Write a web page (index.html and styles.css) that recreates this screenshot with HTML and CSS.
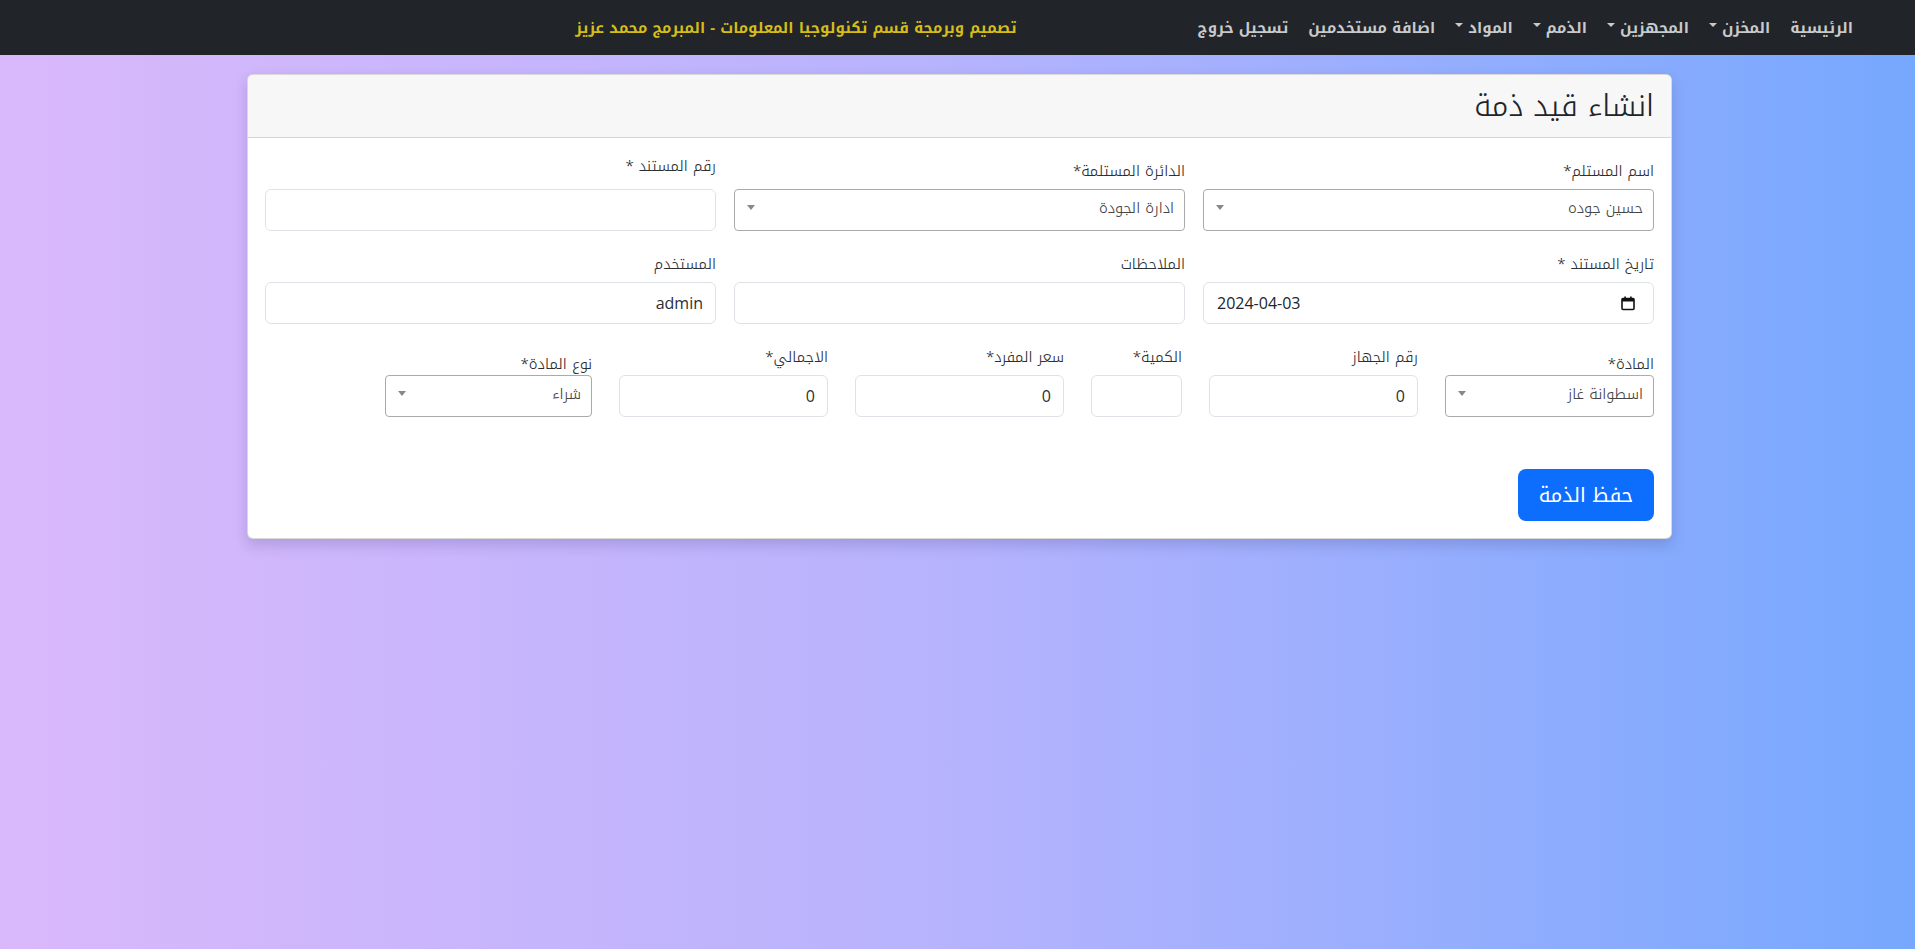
FILE: index.html
```html
<!DOCTYPE html>
<html lang="ar" dir="rtl">
<head>
<meta charset="utf-8">
<title>انشاء قيد ذمة</title>
<link rel="stylesheet" href="styles.css">
</head>
<body>
<nav class="topbar">
  <ul class="nav-links">
    <li class="nav-item">الرئيسية</li>
    <li class="nav-item dd">المخزن</li>
    <li class="nav-item dd">المجهزين</li>
    <li class="nav-item dd">الذمم</li>
    <li class="nav-item dd">المواد</li>
    <li class="nav-item">اضافة مستخدمين</li>
    <li class="nav-item">تسجيل خروج</li>
  </ul>
  <span class="credit">تصميم وبرمجة قسم تكنولوجيا المعلومات - المبرمج محمد عزيز</span>
</nav>

<main class="page">
  <section class="card">
    <header class="card-header">
      <h3 class="card-title">انشاء قيد ذمة</h3>
    </header>
    <div class="card-body">
      <div class="grid3">
        <div class="field">
          <label class="lbl">اسم المستلم*</label>
          <div class="select"><span class="sel-text">حسين جوده</span><span class="sel-arrow"></span></div>
        </div>
        <div class="field">
          <label class="lbl">الدائرة المستلمة*</label>
          <div class="select"><span class="sel-text">ادارة الجودة</span><span class="sel-arrow"></span></div>
        </div>
        <div class="field">
          <label class="lbl lbl-up">رقم المستند *</label>
          <div class="input"></div>
        </div>
      </div>

      <div class="grid3">
        <div class="field">
          <label class="lbl">تاريخ المستند *</label>
          <div class="input date">
            <span class="date-text">2024-04-03</span>
            <svg class="cal" width="14" height="15" viewBox="0 0 14 15"><rect x="1" y="2.5" width="12" height="11" rx="1" fill="none" stroke="#111" stroke-width="1.6"/><rect x="1" y="2.5" width="12" height="3" fill="#111"/><rect x="3.3" y="0.5" width="1.6" height="3" fill="#111"/><rect x="9.1" y="0.5" width="1.6" height="3" fill="#111"/></svg>
          </div>
        </div>
        <div class="field">
          <label class="lbl">الملاحظات</label>
          <div class="input"></div>
        </div>
        <div class="field">
          <label class="lbl">المستخدم</label>
          <div class="input"><span class="val">admin</span></div>
        </div>
      </div>

      <div class="row6">
        <div class="field w-md">
          <label class="lbl lbl-down">المادة*</label>
          <div class="select"><span class="sel-text">اسطوانة غاز</span><span class="sel-arrow"></span></div>
        </div>
        <div class="field w-md">
          <label class="lbl">رقم الجهاز</label>
          <div class="input"><span class="val">0</span></div>
        </div>
        <div class="field w-sm">
          <label class="lbl">الكمية*</label>
          <div class="input"></div>
        </div>
        <div class="field w-md">
          <label class="lbl">سعر المفرد*</label>
          <div class="input"><span class="val">0</span></div>
        </div>
        <div class="field w-md">
          <label class="lbl">الاجمالي*</label>
          <div class="input"><span class="val">0</span></div>
        </div>
        <div class="field w-md2">
          <label class="lbl lbl-down">نوع المادة*</label>
          <div class="select"><span class="sel-text">شراء</span><span class="sel-arrow"></span></div>
        </div>
      </div>

      <div class="actions">
        <button class="btn" type="button">حفظ الذمة</button>
      </div>
    </div>
  </section>
</main>
</body>
</html>
```

FILE: styles.css
```css
* { box-sizing: border-box; }

html, body {
  margin: 0;
  padding: 0;
}

body {
  min-height: 949px;
  font-family: "Noto Kufi Arabic", "Noto Sans Arabic", "Open Sans", "DejaVu Sans", sans-serif;
  font-size: 16px;
  color: #212529;
  background: linear-gradient(to right, #dab8fb 0%, #b6b3fd 50%, #76a8fe 100%);
}

/* ---------- top bar ---------- */
.topbar {
  height: 55px;
  background: #212529;
  display: flex;
  align-items: center;
  padding: 0 62px;
}

.nav-links {
  list-style: none;
  margin: 0;
  padding: 0;
  display: flex;
  align-items: center;
  gap: 20px;
}

.nav-item {
  color: #c9cacb;
  font-weight: 700;
  font-size: 15px;
  white-space: nowrap;
  display: flex;
  align-items: center;
}

.nav-item.dd::after {
  content: "";
  display: inline-block;
  margin-right: 5px;
  border-top: 4px solid #c9cacb;
  border-left: 4px solid transparent;
  border-right: 4px solid transparent;
  transform: translateY(-3px);
}

.credit {
  margin-right: 181px;
  color: #d6bd1a;
  font-weight: 700;
  font-size: 15px;
  white-space: nowrap;
}

/* ---------- page ---------- */
.page {
  padding: 19px 243px 0 247px;
}

.card {
  background: #fff;
  border: 1px solid rgba(0, 0, 0, 0.15);
  border-radius: 6px;
  box-shadow: 0 6px 14px rgba(40, 30, 90, 0.18);
  overflow: hidden;
}

.card-header {
  height: 63px;
  background: #f7f7f7;
  border-bottom: 1px solid #d6d6d6;
  display: flex;
  align-items: center;
  padding: 0 17px;
}

.card-title {
  margin: 0;
  font-size: 30px;
  font-weight: 300;
  color: #212529;
  line-height: 1;
}

.card-body {
  padding: 16px 17px 17px;
}

.grid3 {
  display: grid;
  grid-template-columns: repeat(3, 1fr);
  gap: 18px;
  margin-bottom: 21px;
}

.row6 {
  display: flex;
  gap: 27px;
}

.w-md { width: 209px; }
.w-sm { width: 91px; }
.w-md2 { width: 207px; }

.field {
  display: flex;
  flex-direction: column;
  justify-content: flex-end;
}

.lbl {
  display: block;
  font-size: 15px;
  font-weight: 300;
  line-height: 24px;
  margin-bottom: 6px;
  color: #2b2f33;
  white-space: nowrap;
}

.lbl-up { margin-bottom: 11px; }
.lbl-down { margin-bottom: -1px; }

.input {
  height: 42px;
  border: 1px solid #dee2e6;
  border-radius: 6px;
  background: #fff;
  display: flex;
  align-items: center;
  padding: 0 12px;
}

.val {
  font-family: "Open Sans", "DejaVu Sans", sans-serif;
  font-size: 16px;
  color: #2b2f33;
}

.input.date {
  direction: ltr;
  justify-content: space-between;
  padding: 0 12px 0 13px;
}

.date-text {
  font-family: "Open Sans", "DejaVu Sans", sans-serif;
  font-size: 16px;
  color: #212529;
}

.cal { display: block; margin-right: 6px; }

.select {
  height: 42px;
  border: 1px solid #aaa;
  border-radius: 4px;
  background: #fff;
  display: flex;
  justify-content: space-between;
  align-items: flex-start;
  padding: 6px 10px 0 12px;
}

.sel-text {
  font-size: 15px;
  font-weight: 300;
  line-height: 24px;
  color: #444;
}

.sel-arrow {
  margin-top: 9px;
  border-top: 5px solid #888;
  border-left: 4px solid transparent;
  border-right: 4px solid transparent;
}

.actions {
  margin-top: 52px;
  display: flex;
}

.btn {
  width: 136px;
  height: 52px;
  border: 0;
  border-radius: 8px;
  background: #0d6efd;
  color: #fff;
  font-family: inherit;
  font-size: 20px;
  cursor: pointer;
}
```
